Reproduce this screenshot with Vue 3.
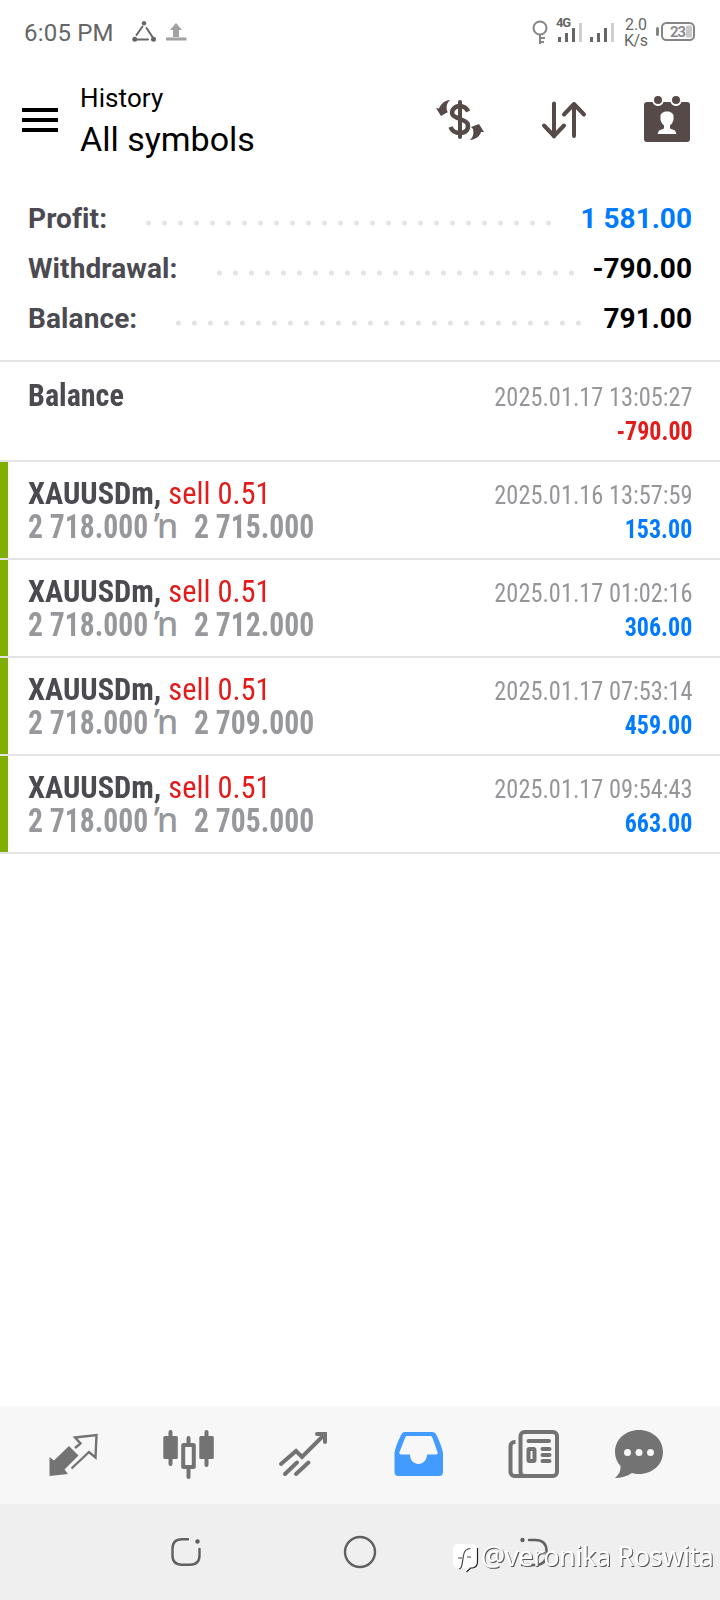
<script setup>
const summary = [
  { label: 'Profit:', value: '1 581.00', tone: 'blue', start: 145.5, count: 26 },
  { label: 'Withdrawal:', value: '-790.00', tone: 'black', start: 216.5, count: 23 },
  { label: 'Balance:', value: '791.00', tone: 'black', start: 175.5, count: 26 },
]
const deals = [
  { to: '2 715.000', time: '2025.01.16 13:57:59', profit: '153.00' },
  { to: '2 712.000', time: '2025.01.17 01:02:16', profit: '306.00' },
  { to: '2 709.000', time: '2025.01.17 07:53:14', profit: '459.00' },
  { to: '2 705.000', time: '2025.01.17 09:54:43', profit: '663.00' },
]
</script>

<template>
  <div class="screen">
    <header class="status">
      <span class="clock">6:05 PM</span>
      <svg class="status-left" width="60" height="26" viewBox="130 19 60 26">
        <g fill="none" stroke="#666" stroke-width="2" stroke-linecap="round">
          <path d="M142.500 26.500L136.500 35M146.500 28L152.500 37M137.500 39.500H148" />
        </g>
        <g fill="#666"><circle cx="144" cy="23.200" r="2.200" /><circle cx="134.800" cy="39.300" r="2.500" /><circle cx="153.500" cy="39.300" r="2.500" /></g>
        <path d="M176 23l6 7h-3v7h-6v-7h-3zM166 37.500h20.500v3H166z" fill="#a2a2a2" />
      </svg>
      <svg class="status-right" width="170" height="36" viewBox="530 14 170 36">
        <g fill="none" stroke="#858585" stroke-width="2"><circle cx="540" cy="28" r="6.500" /><path d="M540 35v9M540 38h5M540 42h4" /></g>
        <text x="556" y="27" class="net" textLength="15">4G</text>
        <g fill="#666"><path d="M558 37h3v5h-3zM565 33h3v9h-3zM572 28h3v14h-3zM590 37h3v5h-3zM597 33h3v9h-3zM604 28h3v14h-3z" /></g>
        <path d="M579 23h3v19h-3zM611 23h3v19h-3z" fill="#d0d0d0" />
        <text x="625" y="30" class="rate" textLength="22">2.0</text>
        <text x="624" y="46" class="rate" textLength="24">K/s</text>
        <rect x="656" y="27" width="3" height="9" rx="1.500" fill="#858585" />
        <rect x="662" y="23" width="32" height="17" rx="4.500" fill="none" stroke="#858585" stroke-width="2" />
        <rect x="686" y="25.500" width="6" height="12" rx="1.500" fill="#c8c8c8" />
        <text x="670" y="37" class="batt" textLength="16">23</text>
      </svg>
    </header>

    <div class="toolbar">
      <svg class="menu" width="36" height="24" viewBox="0 0 36 24"><path d="M0 0h36v4H0zM0 10h36v4H0zM0 20h36v4H0z" /></svg>
      <div class="titles">
        <span class="sub">History</span>
        <span class="main">All symbols</span>
      </div>
      <svg class="actions" width="264" height="52" viewBox="430 92 264 52">
        <g fill="none" stroke="#554a47" stroke-width="4">
          <path d="M460 102v35" stroke-linecap="round" />
          <path d="M468 111.500c-2-5-6-5.500-9-5.500-5 .5-8 5-6.500 8.500 2 4 13 5 15 9 2 6-2 9.500-7.500 9.500-5 0-8-2-9.500-6" stroke-width="4.500" />
        </g>
        <path d="M450 100c-3 3-4 6-3 11l1 1-7 4-5-8 3 .5c2-5 6-8 11-8.500zM470 140c3-3 4-6 3-11l-2-2 8-3 5 8h-3c-1 4-5 7.500-11 8z" fill="#554a47" />
        <path d="M554 103.500v33M544 125.500l10 10.500 10-10.500M574 136v-32M564 114.500l10-10.500 10 10.500" fill="none" stroke="#554a47" stroke-width="4" stroke-linecap="round" stroke-linejoin="round" />
        <path fill="#554a47" fill-rule="evenodd" d="M647 102h5.500c1 2.500 3 4 5.500 4s4.500-1.500 5.500-4h7c1 2.500 3 4 5.500 4s4.500-1.500 5.500-4h5.500a3 3 0 0 1 3 3v34a3 3 0 0 1-3 3H647a3 3 0 0 1-3-3v-34a3 3 0 0 1 3-3zM662 113l-1.500 2v5l1.500 3.500 2 2v3l-5 2-1.500 3.500h19l-1.500-3.500-5-2v-3l2-2 1.500-3.500v-5l-1.500-2-3-1.500h-4z" />
        <g fill="#554a47"><circle cx="658" cy="100" r="4" /><circle cx="676" cy="100" r="4" /></g>
      </svg>
    </div>

    <section class="summary">
      <div v-for="row in summary" :key="row.label" class="sum-row">
        <span class="sum-label">{{ row.label }}</span>
        <svg class="dots" width="720" height="8">
          <circle v-for="n in row.count" :key="n" :cx="row.start + 3 + (n - 1) * 16" cy="4" r="2.500" fill="#e3e3e5" />
        </svg>
        <span class="sum-value" :class="row.tone">{{ row.value }}</span>
      </div>
    </section>

    <main class="deals">
      <div class="deal first">
        <div class="line top"><span class="symbol cond">Balance</span><span class="time cond">2025.01.17 13:05:27</span></div>
        <div class="line bottom"><span></span><span class="amount cond red">-790.00</span></div>
      </div>
      <div v-for="d in deals" :key="d.time" class="deal trade">
        <div class="line top">
          <span class="symbol cond">XAUUSDm, <span class="side">sell 0.51</span></span>
          <span class="time cond">{{ d.time }}</span>
        </div>
        <div class="line bottom">
          <span class="prices"><span class="price cond">2 718.000</span><span class="sep">ŉ</span><span class="price cond">{{ d.to }}</span></span>
          <span class="amount cond blue">{{ d.profit }}</span>
        </div>
      </div>
    </main>

    <nav class="tabs">
      <svg width="720" height="98" viewBox="0 1406 720 98">
        <path d="M75 1448l5.500-4.500-5.500-6 21.500-2.500-1 22.500-6.500-5.500-17.500 16.500" fill="none" stroke="#737373" stroke-width="2.400" />
        <path d="M69 1446l9.500 9.500-14 14 3.500 4.500-18.500 2V1457l4.500 3.500z" fill="#737373" />
        <g fill="#737373">
          <rect x="163.300" y="1436" width="14.500" height="23" rx="1.500" /><rect x="199.300" y="1436" width="14.500" height="23" rx="1.500" />
        </g>
        <path d="M170.500 1432v32M206.500 1432v33M188.500 1438v7M188.500 1468v9" stroke="#737373" stroke-width="4" stroke-linecap="round" />
        <rect x="183.200" y="1445" width="10.600" height="22" rx=".5" fill="none" stroke="#737373" stroke-width="4" />
        <path d="M281 1464l15-13 6 6 21-21M317 1434h8v8M285 1474l12-11.500M296 1474l12.500-11.500" fill="none" stroke="#737373" stroke-width="4" stroke-linecap="round" />
        <path fill="#429bff" fill-rule="evenodd" d="M405 1432h27c2 0 3.500 1 4.500 3 3 6.500 6.500 15 6.500 19v18.500a4 4 0 0 1-4 3.500h-40.500a4 4 0 0 1-4-3.500V1454c0-5 4-13.500 6.500-19 1-2 2-3 4-3zM407.500 1436c-1.500 0-2 .5-2.500 2l-5.500 14c-.5 1.500 0 2.500 1.500 2.500h9c0 6 4 9.500 8.500 9.500s8.500-4 8.500-9.500h9c1.500 0 2-1 1.500-2.500l-5-14c-.5-1.500-1-2-2.500-2z" />
        <g fill="none" stroke="#737373" stroke-width="4">
          <rect x="520.500" y="1432" width="36.500" height="44" rx="4" />
          <path d="M515.500 1442h-1a4 4 0 0 0-4 4v26a4 4 0 0 0 4 4h10" />
          <path d="M528.500 1441h20.500M542.500 1449h7M542.500 1455h7M542.500 1461h7" stroke-linecap="round" />
          <rect x="528.500" y="1449" width="6" height="12" rx="1" />
        </g>
        <path d="M639 1430c13.500 0 24 9.500 24 22s-10.500 22-24 22c-2.500 0-5-.3-7-1-5 3.500-11 5-17 5 4-3.500 6-7.500 5.500-12-3.500-4-5.500-8.500-5.500-14 0-12.500 10.500-22 24-22z" fill="#737373" />
        <g fill="#f7f7f7"><circle cx="627.500" cy="1452.500" r="3.500" /><circle cx="639" cy="1452.500" r="3.500" /><circle cx="650.500" cy="1452.500" r="3.500" /></g>
      </svg>
    </nav>

    <footer class="navbar">
      <svg width="720" height="96" viewBox="0 1504 720 96">
        <g fill="none" stroke="#606060" stroke-width="2.400" stroke-linecap="round">
          <path d="M188 1539.200h-6q-9.500 0-9.500 9.500v6.500q0 9.500 9.500 9.500h8q9.500 0 9.500-9.500V1549" />
          <circle cx="360" cy="1552" r="15" />
          <path d="M529 1540h6q11.500 0 11.500 11v3q0 11-11.500 11h-13" />
        </g>
        <circle cx="197.500" cy="1541.500" r="2.200" fill="#606060" /><circle cx="522.500" cy="1540" r="2.200" fill="#606060" />
        <path d="M459 1544h12c4 0 6 2 6 6v12c0 4-2 6-6 6l-5 3v-3h-7c-4 0-6-2-6-6v-12c0-4 2-6 6-6z" fill="#fff" />
        <path d="M477.500 1548v14q0 5-5 6h-2l-4 4" fill="none" stroke="#222" stroke-width="1.200" />
        <path d="M470.500 1548.500q-6 0-7 7l-1.500 9q-.5 4-3 4.500M458 1558h4M467 1557h4" fill="none" stroke="#444" stroke-width="1.200" />
        <text class="mark" x="481" y="1566" textLength="233">@veronika Roswita</text>
      </svg>
    </footer>
  </div>
</template>

<style>
body { margin: 0; background: #fff; }
</style>

<style scoped>
.screen { width: 720px; height: 1600px; overflow: hidden; background: #fff; display: flex; flex-direction: column; font-family: Roboto, "Liberation Sans", sans-serif; }
svg { display: block; flex: none; }
.status { height: 64px; display: flex; align-items: flex-start; box-sizing: border-box; }
.clock { width: 106px; margin-left: 24px; margin-top: 19px; font-size: 24px; line-height: 28px; font-weight: 450; letter-spacing: .2px; color: #666; white-space: nowrap; }
.status-left { margin-top: 19px; }
.status-right { margin: 14px 0 0 340px; }
.net { font-size: 13px; font-weight: 700; fill: #666; }
.rate { font-size: 16px; fill: #666; }
.batt { font-size: 15px; font-weight: 600; fill: #858585; }
.toolbar { height: 129px; display: flex; align-items: flex-start; }
.menu { margin: 44px 0 0 22px; }
.titles { width: 350px; margin: 18px 0 0 22px; display: flex; flex-direction: column; white-space: nowrap; }
.sub { font-size: 26px; line-height: 32px; letter-spacing: .1px; }
.main { font-size: 34px; line-height: 40px; margin-top: 5px; }
.actions { margin-top: 28px; }
.summary { height: 167px; border-bottom: 2px solid #e4e4e6; }
.sum-row { display: grid; grid-template-columns: 1fr auto; height: 50px; line-height: 52px; padding: 0 28px; font-size: 28px; font-weight: 700; white-space: nowrap; color: #4b4a51; }
.sum-label { grid-area: 1 / 1; letter-spacing: .1px; }
.sum-value { grid-area: 1 / 2; }
.dots { grid-area: 1 / 1 / 2 / 3; margin: 26.300px -28px 0; }
.black { color: #000; }
.blue { color: #007aff; }
.red { color: #e21b1b; }
.deals { flex: 1; }
.deal { box-sizing: border-box; height: 98px; padding: 14px 28px 0; border-bottom: 2px solid #e4e4e6; }
.first { height: 100px; padding-top: 16px; }
.trade { background: linear-gradient(#7fb000, #7fb000) 0 0 / 8px 100% no-repeat; background-clip: padding-box; }
.line { display: flex; justify-content: space-between; height: 34px; line-height: 34px; white-space: nowrap; }
.cond { font-stretch: 75%; }
.symbol { font-size: 32px; font-weight: 700; color: #4b4a51; transform: scaleX(.951); transform-origin: left; }
.first .symbol { transform: scaleX(.94); }
.side { font-weight: 400; color: #e21b1b; }
.time { font-size: 26px; color: #96969a; padding-top: 2px; margin-right: -.5px; transform: scaleX(.937); transform-origin: right; }
.prices { display: flex; height: 34px; font-size: 33px; font-weight: 700; color: #96989b; }
.price { width: 120px; transform: scaleX(.897); transform-origin: left; }
.sep { width: 46px; padding-left: 6px; margin-top: -2px; box-sizing: border-box; font-family: "Noto Sans", sans-serif; font-size: 34px; font-weight: 500; }
.amount { font-size: 26px; font-weight: 700; padding-top: 2px; margin-right: -.3px; transform: scaleX(.922); transform-origin: right; }
.tabs { height: 98px; background: #f7f7f7; }
.navbar { height: 96px; background: #efefef; }
.mark { font-family: "Noto Sans", sans-serif; font-weight: 400; font-size: 27px; fill: #fff; filter: drop-shadow(1px 1px 0 #555); }
</style>
